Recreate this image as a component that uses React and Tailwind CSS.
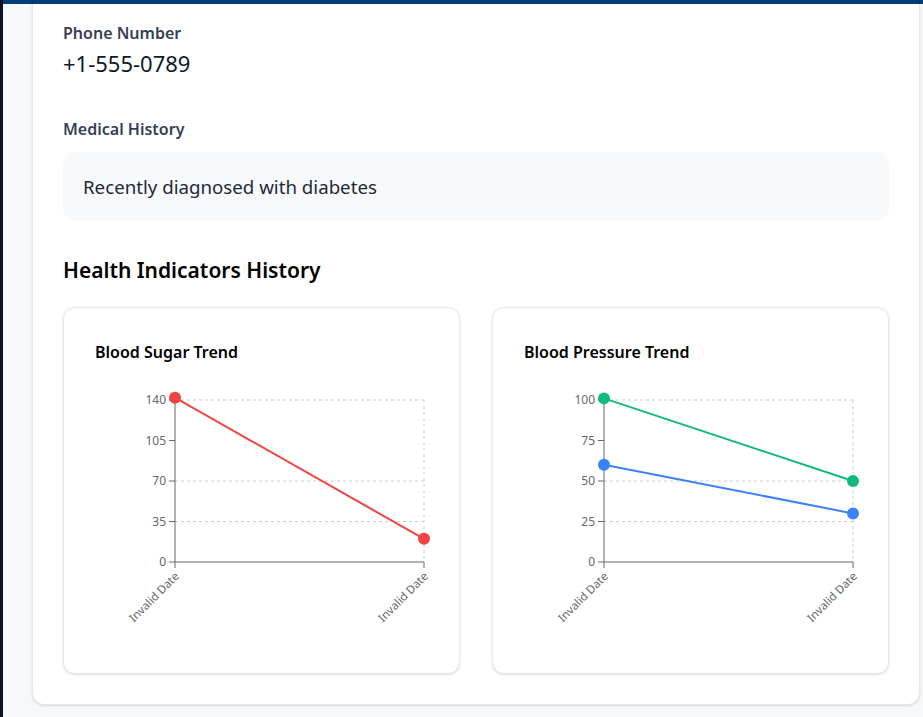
import React from 'react';

const FONT = { fontFamily: '"Noto Sans", "Open Sans", sans-serif' };

const sugarData = {
  max: 140,
  ticks: [140, 105, 70, 35, 0],
  series: [{ color: '#ef4444', values: [142, 20] }],
};

const pressureData = {
  max: 100,
  ticks: [100, 75, 50, 25, 0],
  series: [
    { color: '#10b981', values: [101, 50] },
    { color: '#3b82f6', values: [60, 30] },
  ],
};

const TrendChart = ({ data }) => {
  const left = 80;
  const right = 329;
  const top = 23;
  const bottom = 185;
  const xs = [left, right];
  const yOf = (v) => bottom - (v / data.max) * (bottom - top);

  return (
    <svg width="330" height="264" className="overflow-visible block">
      {/* grid */}
      {data.ticks.map((t, i) =>
        t === 0 || i === 1 ? null : (
          <line key={t} x1={left} x2={right} y1={yOf(t)} y2={yOf(t)} stroke="#ccc" strokeDasharray="3 3" />
        )
      )}
      <line x1={right} x2={right} y1={top} y2={bottom} stroke="#ccc" strokeDasharray="3 3" />

      {/* y axis */}
      <line x1={left} x2={left} y1={top} y2={bottom} stroke="#666" />
      {data.ticks.map((t) => (
        <g key={t}>
          <line x1={left - 6} x2={left} y1={yOf(t)} y2={yOf(t)} stroke="#666" />
          <text x={left - 9} y={yOf(t)} dy="0.355em" textAnchor="end" fontSize="12" fill="#666">
            {t}
          </text>
        </g>
      ))}

      {/* x axis */}
      <line x1={left} x2={right} y1={bottom} y2={bottom} stroke="#666" />
      {xs.map((x) => (
        <g key={x}>
          <line x1={x} x2={x} y1={bottom} y2={bottom + 6} stroke="#666" />
          <text
            x={x + 2}
            y={bottom + 12}
            dy="0.355em"
            textAnchor="end"
            fontSize="11.5"
            fill="#666"
            transform={`rotate(-45 ${x + 2} ${bottom + 12})`}
          >
            Invalid Date
          </text>
        </g>
      ))}

      {/* lines */}
      {data.series.map((s) => (
        <g key={s.color}>
          <line x1={xs[0]} y1={yOf(s.values[0])} x2={xs[1]} y2={yOf(s.values[1])} stroke={s.color} strokeWidth="2" />
          {s.values.map((v, i) => (
            <circle key={i} cx={xs[i]} cy={yOf(v)} r="6" fill={s.color} />
          ))}
        </g>
      ))}
    </svg>
  );
};

const ChartCard = ({ title, data }) => (
  <div className="bg-white border border-gray-200 rounded-xl shadow-sm pl-[31px] pr-8 pt-8 pb-8">
    <h3 className="text-base leading-6 font-semibold text-black">{title}</h3>
    <div className="mt-[13px]">
      <TrendChart data={data} />
    </div>
  </div>
);

export default function App() {
  return (
    <div className="flex h-[717px] overflow-hidden" style={FONT}>
      <div className="w-[3px] bg-[#0c1424]" />
      <main className="flex-1 flex flex-col bg-[#f7f8fa]">
        <div className="h-1 bg-[#003d7a]" />
        <div className="pl-[29px] pr-[3px]">
          <div className="bg-white border border-t-0 border-gray-200 rounded-b-xl shadow-sm px-[30px] pt-[17px] pb-[30px]">
            {/* Phone */}
            <div>
              <div className="text-base leading-6 font-semibold text-gray-700">Phone Number</div>
              <div className="mt-1 text-[22px] leading-7 text-gray-900">+1-555-0789</div>
            </div>

            {/* Medical history */}
            <div className="mt-10">
              <div className="text-base leading-6 font-semibold text-gray-700">Medical History</div>
              <div className="mt-[11px] bg-[#f8f9fa] rounded-xl px-5 py-5">
                <p className="text-[18.7px] leading-[29px] text-gray-800">Recently diagnosed with diabetes</p>
              </div>
            </div>

            {/* Charts */}
            <h2 className="mt-[33px] text-[21px] leading-8 font-semibold text-black">Health Indicators History</h2>
            <div className="mt-[21px] grid grid-cols-2 gap-8">
              <ChartCard title="Blood Sugar Trend" data={sugarData} />
              <ChartCard title="Blood Pressure Trend" data={pressureData} />
            </div>
          </div>
        </div>
      </main>
    </div>
  );
}
